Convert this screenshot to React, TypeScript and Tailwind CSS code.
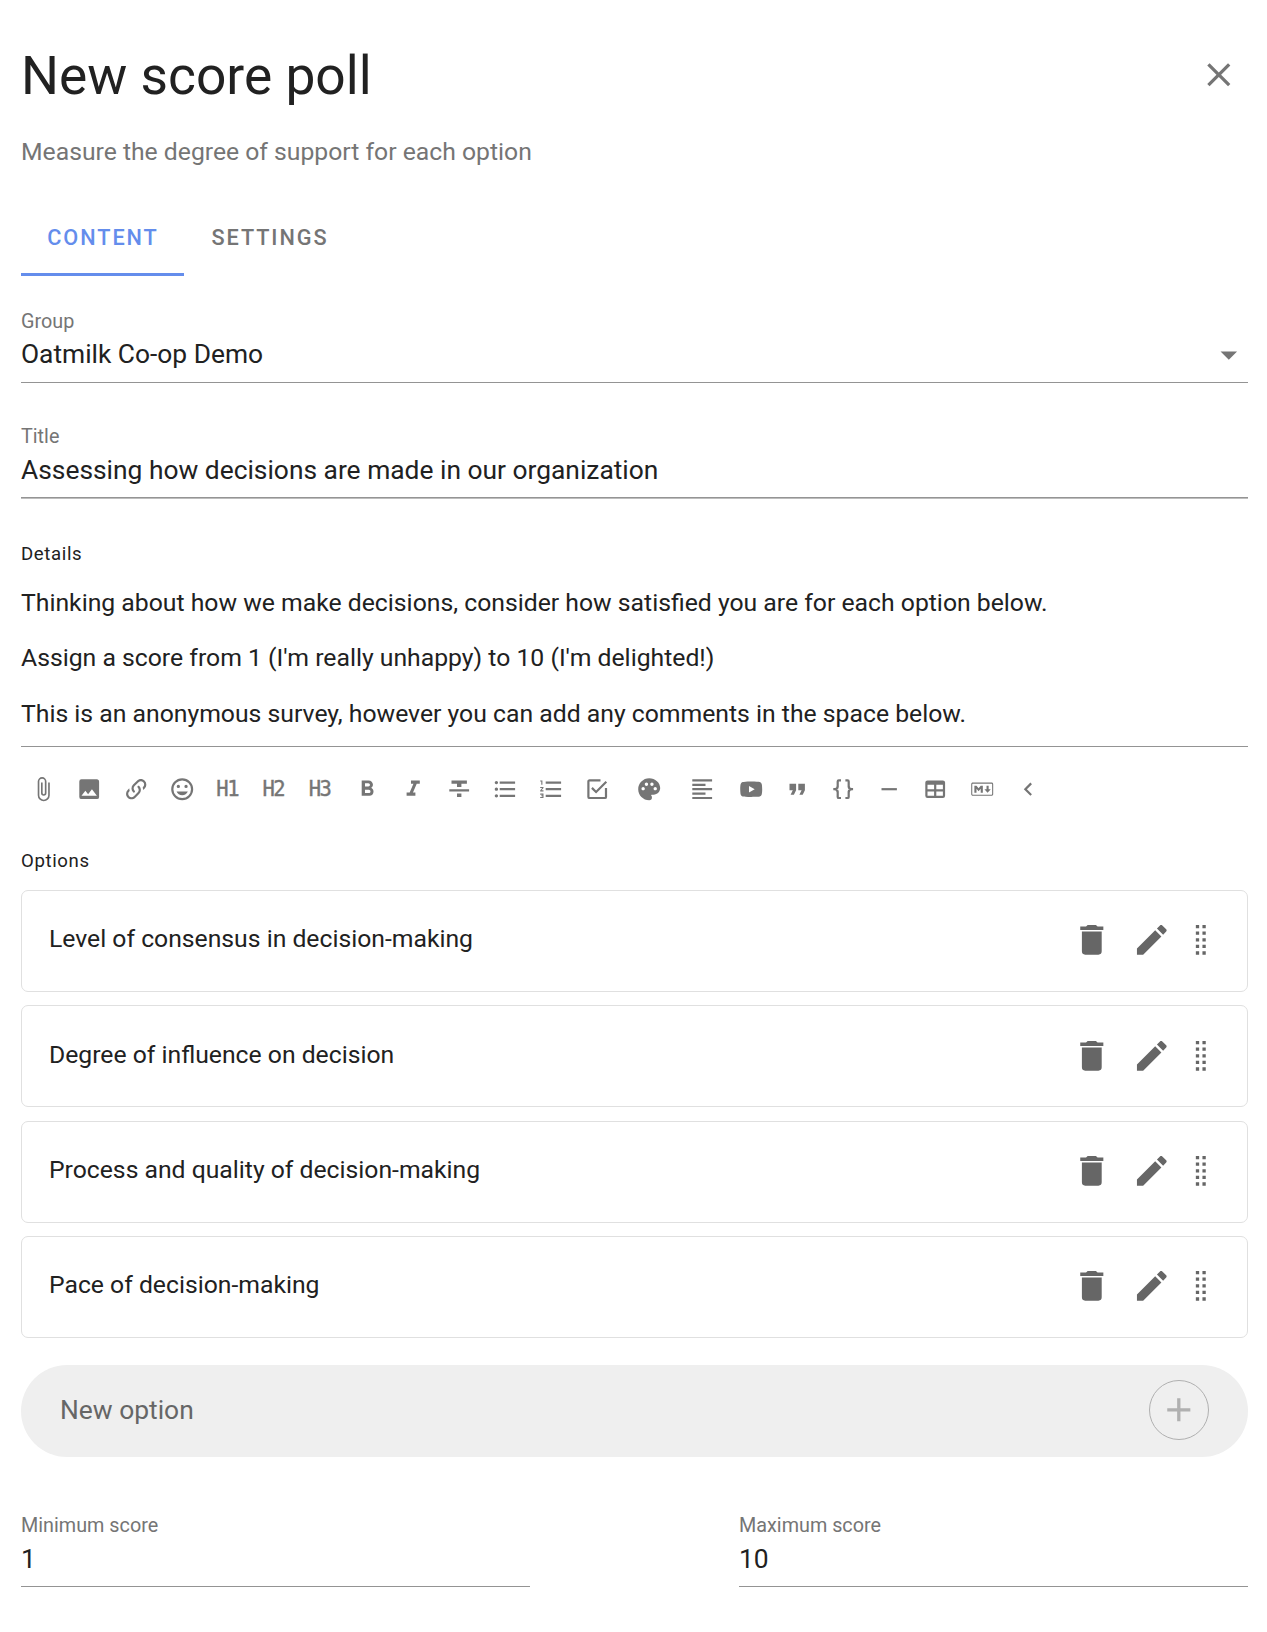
import type { ReactNode } from "react";
import {
  MdFormatAlignLeft,
  MdFormatBold,
  MdFormatItalic,
  MdFormatListBulleted,
  MdFormatListNumbered,
  MdFormatQuote,
  MdChevronLeft,
  MdPalette,
  MdRemove,
} from "react-icons/md";

const paths = {
  close:
    "M19,6.41L17.59,5L12,10.59L6.41,5L5,6.41L10.59,12L5,17.59L6.41,19L12,13.41L17.59,19L19,17.59L13.41,12L19,6.41Z",
  menuDown: "M7,10L12,15L17,10H7Z",
  paperclip:
    "M16.5,6V17.5A4,4 0 0,1 12.5,21.5A4,4 0 0,1 8.5,17.5V5A2.5,2.5 0 0,1 11,2.5A2.5,2.5 0 0,1 13.5,5V15.5A1,1 0 0,1 12.5,16.5A1,1 0 0,1 11.5,15.5V6H10V15.5A2.5,2.5 0 0,0 12.5,18A2.5,2.5 0 0,0 15,15.5V5A4,4 0 0,0 11,1A4,4 0 0,0 7,5V17.5A5.5,5.5 0 0,0 12.5,23A5.5,5.5 0 0,0 18,17.5V6H16.5Z",
  image:
    "M8.5,13.5L11,16.5L14.5,12L19,18H5M21,19V5C21,3.89 20.1,3 19,3H5A2,2 0 0,0 3,5V19A2,2 0 0,0 5,21H19A2,2 0 0,0 21,19Z",
  link: "M10.59,13.41C11,13.8 11,14.44 10.59,14.83C10.2,15.22 9.56,15.22 9.17,14.83C7.22,12.88 7.22,9.71 9.17,7.76V7.76L12.71,4.22C14.66,2.27 17.83,2.27 19.78,4.22C21.73,6.17 21.73,9.34 19.78,11.29L18.29,12.78C18.3,11.96 18.17,11.14 17.89,10.36L18.36,9.88C19.54,8.71 19.54,6.81 18.36,5.64C17.19,4.46 15.29,4.46 14.12,5.64L10.59,9.17C9.41,10.34 9.41,12.24 10.59,13.41M13.41,9.17C13.8,8.78 14.44,8.78 14.83,9.17C16.78,11.12 16.78,14.29 14.83,16.24V16.24L11.29,19.78C9.34,21.73 6.17,21.73 4.22,19.78C2.27,17.83 2.27,14.66 4.22,12.71L5.71,11.22C5.7,12.04 5.83,12.86 6.11,13.65L5.64,14.12C4.46,15.29 4.46,17.19 5.64,18.36C6.81,19.54 8.71,19.54 9.88,18.36L13.41,14.83C14.59,13.66 14.59,11.76 13.41,10.59C13,10.2 13,9.56 13.41,9.17Z",
  emoticon:
    "M12,17.5C14.33,17.5 16.3,16.04 17.11,14H6.89C7.69,16.04 9.67,17.5 12,17.5M8.5,11A1.5,1.5 0 0,0 10,9.5A1.5,1.5 0 0,0 8.5,8A1.5,1.5 0 0,0 7,9.5A1.5,1.5 0 0,0 8.5,11M15.5,11A1.5,1.5 0 0,0 17,9.5A1.5,1.5 0 0,0 15.5,8A1.5,1.5 0 0,0 14,9.5A1.5,1.5 0 0,0 15.5,11M12,20A8,8 0 0,1 4,12A8,8 0 0,1 12,4A8,8 0 0,1 20,12A8,8 0 0,1 12,20M12,2C6.47,2 2,6.5 2,12A10,10 0 0,0 12,22A10,10 0 0,0 22,12A10,10 0 0,0 12,2Z",
  strike: "M3,14H21V12H3M5,4V7H10V10H14V7H19V4M10,19H14V16H10V19Z",
  checkbox:
    "M19,19H5V5H15V3H5C3.89,3 3,3.89 3,5V19A2,2 0 0,0 5,21H19A2,2 0 0,0 21,19V11H19M7.91,10.08L6.5,11.5L11,16L21,6L19.59,4.58L11,13.17L7.91,10.08Z",
  video:
    "M10,15L15.19,12L10,9V15M21.56,7.17C21.69,7.64 21.78,8.27 21.84,9.07C21.91,9.87 21.94,10.56 21.94,11.16L22,12C22,14.19 21.84,15.8 21.56,16.83C21.31,17.73 20.73,18.31 19.83,18.56C19.36,18.69 18.5,18.78 17.18,18.84C15.88,18.91 14.69,18.94 13.59,18.94L12,19C7.81,19 5.2,18.84 4.17,18.56C3.27,18.31 2.69,17.73 2.44,16.83C2.31,16.36 2.22,15.73 2.16,14.93C2.09,14.13 2.06,13.44 2.06,12.84L2,12C2,9.81 2.16,8.2 2.44,7.17C2.69,6.27 3.27,5.69 4.17,5.44C4.64,5.31 5.5,5.22 6.82,5.16C8.12,5.09 9.31,5.06 10.41,5.06L12,5C16.19,5 18.8,5.16 19.83,5.44C20.73,5.69 21.31,6.27 21.56,7.17Z",
  braces:
    "M8,3A2,2 0 0,0 6,5V9A2,2 0 0,1 4,11H3V13H4A2,2 0 0,1 6,15V19A2,2 0 0,0 8,21H10V19H8V14A2,2 0 0,0 6,12A2,2 0 0,0 8,10V5H10V3M16,3A2,2 0 0,1 18,5V9A2,2 0 0,0 20,11H21V13H20A2,2 0 0,0 18,15V19A2,2 0 0,1 16,21H14V19H16V14A2,2 0 0,1 18,12A2,2 0 0,1 16,10V5H14V3H16Z",
  table:
    "M5,4H19A2,2 0 0,1 21,6V18A2,2 0 0,1 19,20H5A2,2 0 0,1 3,18V6A2,2 0 0,1 5,4M5,8V12H11V8H5M13,8V12H19V8H13M5,14V18H11V14H5M13,14V18H19V14H13Z",
  markdown:
    "M20.56 18H3.44C2.65 18 2 17.37 2 16.59V7.41C2 6.63 2.65 6 3.44 6H20.56C21.35 6 22 6.63 22 7.41V16.59C22 17.37 21.35 18 20.56 18M3.44 6.94C3.18 6.94 2.96 7.15 2.96 7.41V16.6C2.96 16.85 3.18 17.06 3.44 17.06H20.56C20.82 17.06 21.04 16.85 21.04 16.6V7.41C21.04 7.15 20.82 6.94 20.56 6.94H3.44M4.89 15.19V8.81H6.81L8.73 11.16L10.65 8.81H12.58V15.19H10.65V11.53L8.73 13.88L6.81 11.53V15.19H4.89M16.9 15.19L14 12.09H15.94V8.81H17.86V12.09H19.79L16.9 15.19",
  trash:
    "M19,4H15.5L14.5,3H9.5L8.5,4H5V6H19M6,19A2,2 0 0,0 8,21H16A2,2 0 0,0 18,19V7H6V19Z",
  pencil:
    "M20.71,7.04C21.1,6.65 21.1,6 20.71,5.63L18.37,3.29C18,2.9 17.35,2.9 16.96,3.29L15.12,5.12L18.87,8.87M3,17.25V21H6.75L17.81,9.93L14.06,6.18L3,17.25Z",
  drag: "M9,3H11V5H9V3M13,3H15V5H13V3M9,7H11V9H9V7M13,7H15V9H13V7M9,11H11V13H9V11M13,11H15V13H13V11M9,15H11V17H9V15M13,15H15V17H13V15M9,19H11V21H9V19M13,19H15V21H13V19Z",
  plus: "M19,13H13V19H11V13H5V11H11V5H13V11H19V13Z",
};

function Icon({ d, className = "size-[26.4px]" }: { d: string; className?: string }) {
  return (
    <svg viewBox="0 0 24 24" fill="currentColor" className={`shrink-0 ${className}`} aria-hidden="true">
      <path d={d} />
    </svg>
  );
}

function Tool({ children, width = "w-[46.2px]" }: { children: ReactNode; width?: string }) {
  return <button className={`flex h-[46px] items-center justify-center ${width}`}>{children}</button>;
}

function Heading({ level }: { level: number }) {
  return (
    <Tool>
      <span className="mr-[2px] mt-[-1px] font-['DejaVu_Sans_Mono',monospace] text-[20.5px] leading-6 tracking-[-1.5px] [-webkit-text-stroke:0.4px_#757575]">
        H{level}
      </span>
    </Tool>
  );
}

function FieldLabel({ children }: { children: ReactNode }) {
  return <div className="text-[19.8px] leading-6 text-[#757575]">{children}</div>;
}

function ScoreField({ label, value }: { label: string; value: string }) {
  return (
    <div className="w-[509px]">
      <FieldLabel>{label}</FieldLabel>
      <div className="mt-[3px] border-b border-[#949494] pb-[9px] text-[26.4px] leading-9">{value}</div>
    </div>
  );
}

const details = [
  "Thinking about how we make decisions, consider how satisfied you are for each option below.",
  "Assign a score from 1 (I'm really unhappy) to 10 (I'm delighted!)",
  "This is an anonymous survey, however you can add any comments in the space below.",
];

const options = [
  "Level of consensus in decision-making",
  "Degree of influence on decision",
  "Process and quality of decision-making",
  "Pace of decision-making",
];

const toolIcon = "size-[26.4px]";

export default function App() {
  return (
    <main className="h-[1632px] bg-white pl-[21px] pr-[19px] pt-11 font-['Roboto',sans-serif] text-[#212121]">
      <header className="flex h-16 items-center justify-between">
        <h1 className="text-[53.3px] leading-[64px]">New score poll</h1>
        <button className="mr-[9px] mt-[-2px] text-[#757575]">
          <Icon d={paths.close} className="size-[39.6px]" />
        </button>
      </header>
      <p className="mt-[26px] text-[24.72px] leading-9 text-[#757575]">
        Measure the degree of support for each option
      </p>

      <nav className="mt-[27px] flex h-[79px] text-[21.7px] font-medium tracking-[0.0893em]">
        <button className="w-[163px] border-b-3 border-[#648dec] pl-[1px] pt-[6px] text-[#648dec]">CONTENT</button>
        <button className="w-[171px] pb-[3px] pl-[1px] pt-[6px] text-[#757575]">SETTINGS</button>
      </nav>

      <section className="mt-[34px]">
        <FieldLabel>Group</FieldLabel>
        <div className="mt-[2px] flex items-center justify-between border-b border-[#949494] pb-[10px] text-[26.35px] leading-9">
          Oatmilk Co-op Demo
          <Icon d={paths.menuDown} className="mb-[-6px] mr-[-1px] mt-[-4px] size-[39.6px] text-[#757575]" />
        </div>
      </section>

      <section className="mt-[42px]">
        <FieldLabel>Title</FieldLabel>
        <div className="mt-[3px] border-b border-[#949494] pb-[9px] text-[26.37px] leading-9">
          Assessing how decisions are made in our organization
        </div>
        <div className="h-px bg-[#bdbdbd]" />
      </section>

      <section className="mt-[43px]">
        <div className="text-[18.6px] leading-6 tracking-[0.0333em]">Details</div>
        <div className="mt-[18.5px] flex h-[162.5px] flex-col gap-[19.6px] border-b border-[#949494] text-[24.75px] leading-9">
          {details.map((line) => (
            <p key={line}>{line}</p>
          ))}
        </div>
        <div className="ml-[-0.7px] mt-[19px] flex text-[#757575]">
          <Tool><Icon d={paths.paperclip} /></Tool>
          <Tool><Icon d={paths.image} /></Tool>
          <Tool><Icon d={paths.link} /></Tool>
          <Tool><Icon d={paths.emoticon} /></Tool>
          <Heading level={1} />
          <Heading level={2} />
          <Heading level={3} />
          <Tool><MdFormatBold className={toolIcon} /></Tool>
          <Tool><MdFormatItalic className={toolIcon} /></Tool>
          <Tool><Icon d={paths.strike} /></Tool>
          <Tool><MdFormatListBulleted className={toolIcon} /></Tool>
          <Tool><MdFormatListNumbered className={toolIcon} /></Tool>
          <Tool><Icon d={paths.checkbox} /></Tool>
          <Tool width="w-[56px]"><MdPalette className={toolIcon} /></Tool>
          <Tool width="w-[51px]"><MdFormatAlignLeft className={toolIcon} /></Tool>
          <Tool><Icon d={paths.video} /></Tool>
          <Tool><MdFormatQuote className={toolIcon} /></Tool>
          <Tool><Icon d={paths.braces} /></Tool>
          <Tool><MdRemove className={toolIcon} /></Tool>
          <Tool><Icon d={paths.table} /></Tool>
          <Tool><Icon d={paths.markdown} /></Tool>
          <Tool><MdChevronLeft className={toolIcon} /></Tool>
        </div>
      </section>

      <section className="mt-[37px]">
        <div className="text-[18.6px] leading-6 tracking-[0.0333em]">Options</div>
        <ul className="mt-[17px] flex flex-col gap-[13.4px]">
          {options.map((option) => (
            <li
              key={option}
              className="flex h-[102px] items-center justify-between rounded-[7px] border border-[#e0e0e0] pb-1 pl-[27px] text-[24.72px] leading-9"
            >
              <span className="mt-[0.6px]">{option}</span>
              <span className="mr-[26px] mt-[2px] flex items-center text-[#666]">
                <Icon d={paths.trash} className="mr-[19.6px] size-[39.6px]" />
                <Icon d={paths.pencil} className="mr-[10.2px] size-[39.6px]" />
                <Icon d={paths.drag} className="size-[39.6px]" />
              </span>
            </li>
          ))}
        </ul>
        <div className="mt-[26.8px] flex h-[92px] items-center justify-between rounded-full bg-[#efefef] pl-[39px] pr-[39px] text-[26.4px] text-[#666]">
          <span>New option</span>
          <button className="mt-[-2px] flex size-[60px] items-center justify-center rounded-full border border-[#b0b0b0] text-[#b0b0b0]">
            <Icon d={paths.plus} className="mb-px size-[39.6px]" />
          </button>
        </div>
      </section>

      <section className="mt-[57px] flex justify-between">
        <ScoreField label="Minimum score" value="1" />
        <ScoreField label="Maximum score" value="10" />
      </section>
    </main>
  );
}
